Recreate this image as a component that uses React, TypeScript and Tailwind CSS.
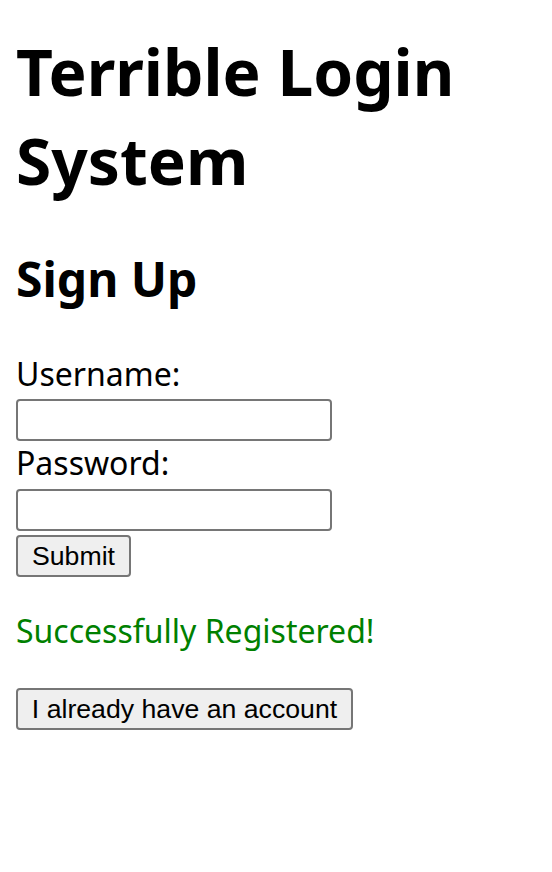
import { useState } from "react";

const inputCls =
  "block w-[316px] h-[42px] border-2 border-[#767676] rounded-[4px] bg-white px-1 outline-none";
const btnCls =
  "block h-[42px] border-2 border-[#767676] rounded-[4px] bg-[#efefef] px-[12px] text-[26.67px] leading-none text-black font-['Liberation_Sans',Arial,sans-serif]";

export default function App() {
  const [username, setUsername] = useState("");
  const [password, setPassword] = useState("");

  return (
    <div className="min-h-[872px] bg-white px-4 text-black font-['Noto_Sans',sans-serif]">
      <h1 className="pt-[27px] text-[64px] leading-[89px] font-bold">
        Terrible Login System
      </h1>
      <h2 className="mt-[41px] text-[48px] leading-[65px] font-bold">
        Sign Up
      </h2>
      <form onSubmit={(e) => e.preventDefault()}>
        <label className="block mt-[41px] text-[32px] leading-[44px]">
          Username:
        </label>
        <input
          className={inputCls + " mt-[3px]"}
          value={username}
          onChange={(e) => setUsername(e.target.value)}
        />
        <label className="block text-[32px] leading-[44px]">Password:</label>
        <input
          type="password"
          className={inputCls + " mt-[4px]"}
          value={password}
          onChange={(e) => setPassword(e.target.value)}
        />
        <button type="submit" className={btnCls + " mt-[4px] w-[115px]"}>
          Submit
        </button>
      </form>
      <p className="mt-[32px] text-[32px] leading-[44px] text-[#008000]">
        Successfully Registered!
      </p>
      <button className={btnCls + " mt-[35px] w-[337px]"}>
        I already have an account
      </button>
    </div>
  );
}
